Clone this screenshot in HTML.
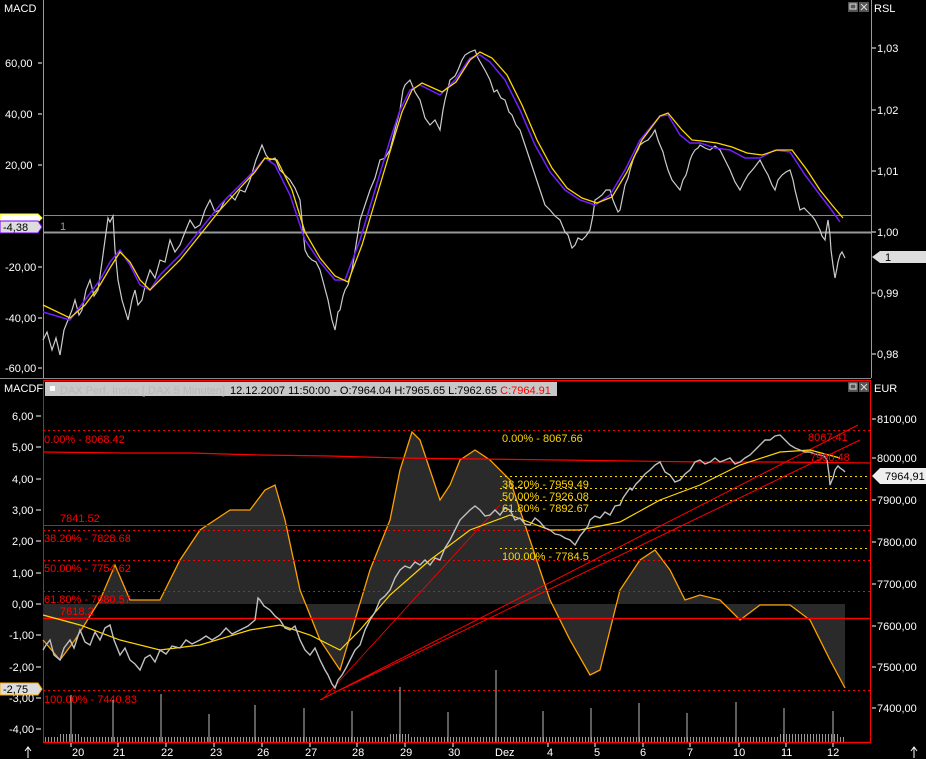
<!DOCTYPE html><html><head><style>
body{margin:0;background:#000;width:926px;height:759px;overflow:hidden;font-family:"Liberation Sans",sans-serif}
svg{display:block}
text{font-family:"Liberation Sans",sans-serif;font-size:11px}
</style></head><body>
<svg width="926" height="759" viewBox="0 0 926 759">
<defs><pattern id="vb" x="0" y="0" width="3" height="10" patternUnits="userSpaceOnUse"><rect x="0" y="0" width="1" height="10" fill="#999"/></pattern></defs>
<rect width="926" height="759" fill="#000"/>
<!-- top panel -->
<line x1="43.5" y1="0" x2="43.5" y2="378" stroke="#999"/>
<line x1="871.5" y1="0" x2="871.5" y2="378" stroke="#999"/>
<line x1="0" y1="378.5" x2="871" y2="378.5" stroke="#888"/>
<line x1="43" y1="215.5" x2="871" y2="215.5" stroke="#888"/>
<line x1="43" y1="232.5" x2="871" y2="232.5" stroke="#999" stroke-width="2"/>
<text x="60" y="230" fill="#999" font-size="10">1</text>
<g fill="#fff" font-size="11">
<text x="4" y="12">MACD</text>
<text x="5" y="67">60,00</text><text x="5" y="118">40,00</text><text x="5" y="169">20,00</text>
<text x="5" y="271">-20,00</text><text x="5" y="322">-40,00</text><text x="5" y="372">-60,00</text>
<text x="874" y="12">RSL</text>
<text x="877" y="52">1,03</text><text x="877" y="114">1,02</text><text x="877" y="175">1,01</text>
<text x="877" y="236">1,00</text><text x="877" y="297">0,99</text><text x="877" y="358">0,98</text>
</g>
<g stroke="#fff"><line x1="38" y1="63" x2="42" y2="63"/><line x1="38" y1="114" x2="42" y2="114"/><line x1="38" y1="165" x2="42" y2="165"/><line x1="38" y1="267" x2="42" y2="267"/><line x1="38" y1="318" x2="42" y2="318"/><line x1="38" y1="368" x2="42" y2="368"/>
<line x1="872" y1="48" x2="876" y2="48"/><line x1="872" y1="110" x2="876" y2="110"/><line x1="872" y1="171" x2="876" y2="171"/><line x1="872" y1="232" x2="876" y2="232"/><line x1="872" y1="293" x2="876" y2="293"/><line x1="872" y1="354" x2="876" y2="354"/></g>
<polygon points="0,214 38,214 42,218 38,222 0,222" fill="#fff" stroke="#ff0"/>
<polygon points="0,221 38,221 42,227 38,233 0,233" fill="#ddd" stroke="#70f"/>
<text x="3" y="231" fill="#000">-4,38</text>
<polygon points="872,257 880,251 926,251 926,263 880,263" fill="#ddd"/>
<text x="885" y="261" fill="#000">1</text>
<rect x="848" y="2" width="10" height="10" fill="#555"/><rect x="850" y="4" width="6" height="5" fill="none" stroke="#ddd"/>
<rect x="859" y="2" width="10" height="10" fill="#555"/><path d="M861 4l6 6M867 4l-6 6" stroke="#ddd"/>
<polyline fill="none" stroke="#ccc" stroke-width="1.2" points="43,340 47,332 52,350 56,338 60,355 64,330 68,320 72,310 75,300 79,315 82,310 86,290 90,280 94,296 98,290 102,262 105,240 108,218 110,222 113,216 115,250 118,280 122,300 125,310 128,320 132,300 135,290 138,305 142,300 146,282 150,270 155,278 160,260 165,262 170,240 175,252 180,245 185,232 190,220 195,228 200,225 205,210 210,200 215,212 220,210 225,200 230,195 235,200 240,190 245,192 250,180 256,160 262,145 266,155 270,160 275,158 280,170 285,175 290,180 295,188 300,200 303,230 305,250 308,256 312,260 316,262 320,270 324,285 328,300 332,320 335,330 338,312 340,310 343,296 345,290 348,285 352,270 356,245 360,220 365,205 370,190 375,178 380,160 385,158 390,150 395,130 400,110 403,90 405,85 408,82 410,80 415,92 420,100 425,118 430,125 435,120 440,130 443,110 445,100 448,88 450,80 455,76 458,70 462,60 465,55 470,52 475,50 478,58 482,65 486,72 490,80 494,92 497,90 501,98 505,100 509,112 512,115 516,125 520,130 525,145 530,160 535,175 540,190 545,205 550,210 555,216 560,220 565,232 568,235 572,248 575,245 578,238 582,240 586,236 590,230 593,215 595,200 598,198 602,195 606,190 610,190 613,200 615,205 618,212 620,210 623,195 625,185 628,178 630,170 633,160 635,155 638,150 640,145 644,142 648,140 652,135 655,130 658,140 660,145 663,152 665,160 668,170 672,180 676,185 680,190 683,180 686,175 688,168 690,160 692,155 695,150 698,148 700,145 705,148 710,150 715,146 720,150 725,160 730,170 735,182 740,190 744,182 748,175 754,168 760,160 764,168 768,175 772,185 775,190 778,180 782,175 786,172 790,170 793,180 795,190 798,202 800,210 804,208 808,212 812,216 815,220 818,226 820,230 822,236 825,240 826,232 828,220 830,235 831,250 833,265 835,278 837,268 838,262 840,255 842,252 845,258"/>
<polyline fill="none" stroke="#7020ff" stroke-width="1.5" points="43,312 70,320 85,300 100,280 110,262 120,250 130,265 140,285 150,290 160,275 180,255 200,230 220,205 240,185 255,170 265,158 275,165 290,195 305,240 320,262 335,280 345,280 360,240 375,190 390,140 400,110 410,90 420,85 440,95 455,80 470,58 480,55 490,62 505,80 520,110 535,145 550,172 565,190 580,200 595,205 610,195 625,170 640,140 660,116 668,115 680,135 690,143 700,143 715,148 730,150 745,158 760,158 775,150 790,152 805,175 820,195 830,208 840,222"/>
<polyline fill="none" stroke="#ffd700" stroke-width="1.3" points="43,305 70,318 85,305 100,285 110,268 120,252 130,262 140,280 150,290 160,280 180,260 200,235 220,210 240,188 255,172 265,158 277,160 292,190 305,232 320,258 335,276 348,282 362,245 377,195 392,145 402,112 412,90 422,83 442,92 456,82 470,60 480,52 492,58 507,75 522,105 537,140 552,168 567,188 582,198 597,203 612,197 627,172 642,140 660,116 668,113 682,130 692,140 702,141 717,143 732,147 747,153 762,155 777,150 792,150 807,170 820,190 832,205 843,218"/>
<!-- bottom panel -->
<rect x="43" y="380" width="828" height="1.5" fill="#f00"/>
<line x1="43.5" y1="380" x2="43.5" y2="743" stroke="#f00"/>
<line x1="870.5" y1="380" x2="870.5" y2="743" stroke="#f00"/>
<rect x="45" y="382" width="512" height="14" fill="#c8c8c8"/>
<rect x="50" y="386" width="5" height="5" fill="#fff"/>
<text x="60" y="394" fill="#b8b8b8">DAX Perf. Index [.DAX  5 Minuten]</text>
<text x="230" y="394" fill="#000">12.12.2007 11:50:00 - O:7964.04 H:7965.65 L:7962.65 <tspan fill="#f00">C:7964.91</tspan></text>
<rect x="848" y="382" width="10" height="10" fill="#555"/><rect x="850" y="384" width="6" height="5" fill="none" stroke="#ddd"/>
<rect x="859" y="382" width="10" height="10" fill="#555"/><path d="M861 384l6 6M867 384l-6 6" stroke="#ddd"/>
<g fill="#fff" font-size="11">
<text x="4" y="392">MACDF</text>
<text x="12" y="420">6,00</text><text x="12" y="451">5,00</text><text x="12" y="483">4,00</text><text x="12" y="514">3,00</text><text x="12" y="545">2,00</text><text x="12" y="577">1,00</text><text x="12" y="608">0,00</text><text x="9" y="639">-1,00</text><text x="9" y="671">-2,00</text><text x="9" y="702">-3,00</text><text x="9" y="733">-4,00</text>
<text x="874" y="392">EUR</text>
<text x="877" y="423">8100,00</text><text x="877" y="462">8000,00</text><text x="877" y="504">7900,00</text><text x="877" y="546">7800,00</text><text x="877" y="588">7700,00</text><text x="877" y="630">7600,00</text><text x="877" y="671">7500,00</text><text x="877" y="712">7400,00</text>
</g>
<g stroke="#fff"><line x1="36" y1="416" x2="41" y2="416"/><line x1="36" y1="447" x2="41" y2="447"/><line x1="36" y1="479" x2="41" y2="479"/><line x1="36" y1="510" x2="41" y2="510"/><line x1="36" y1="541" x2="41" y2="541"/><line x1="36" y1="573" x2="41" y2="573"/><line x1="36" y1="604" x2="41" y2="604"/><line x1="36" y1="635" x2="41" y2="635"/><line x1="36" y1="667" x2="41" y2="667"/><line x1="36" y1="698" x2="41" y2="698"/><line x1="36" y1="729" x2="41" y2="729"/>
<line x1="872" y1="419" x2="876" y2="419"/><line x1="872" y1="458" x2="876" y2="458"/><line x1="872" y1="500" x2="876" y2="500"/><line x1="872" y1="542" x2="876" y2="542"/><line x1="872" y1="584" x2="876" y2="584"/><line x1="872" y1="626" x2="876" y2="626"/><line x1="872" y1="667" x2="876" y2="667"/><line x1="872" y1="708" x2="876" y2="708"/></g>
<!-- histogram fill -->
<polygon fill="#2a2a2a" points="43,604 43,640 60,660 75,640 100,600 115,565 130,600 160,600 180,560 200,530 230,510 250,510 265,490 275,485 285,520 300,590 320,640 340,670 355,620 370,570 390,520 400,470 412,432 420,440 440,500 450,485 460,460 475,450 490,460 510,480 530,540 550,600 570,640 590,675 600,670 620,590 640,560 655,550 670,570 685,600 700,595 720,600 740,620 760,605 790,605 810,620 830,660 845,688 845,604"/>
<polyline fill="none" stroke="#ffa000" stroke-width="1.3" points="43,640 60,660 75,640 100,600 115,565 130,600 160,600 180,560 200,530 230,510 250,510 265,490 275,485 285,520 300,590 320,640 340,670 355,620 370,570 390,520 400,470 412,432 420,440 440,500 450,485 460,460 475,450 490,460 510,480 530,540 550,600 570,640 590,675 600,670 620,590 640,560 655,550 670,570 685,600 700,595 720,600 740,620 760,605 790,605 810,620 830,660 845,688"/>
<!-- fib lines -->
<g stroke="#f00" stroke-dasharray="2,3"><line x1="43" y1="430.5" x2="870" y2="430.5"/><line x1="43" y1="530.5" x2="870" y2="530.5"/><line x1="43" y1="560.5" x2="870" y2="560.5"/><line x1="43" y1="591.5" x2="870" y2="591.5"/><line x1="43" y1="690.5" x2="870" y2="690.5"/></g>
<g stroke="#ffd700" stroke-dasharray="2,3"><line x1="500" y1="476.5" x2="870" y2="476.5"/><line x1="500" y1="488.5" x2="870" y2="488.5"/><line x1="500" y1="500.5" x2="870" y2="500.5"/><line x1="500" y1="548.5" x2="870" y2="548.5"/></g>
<polyline fill="none" stroke="#f00" stroke-width="1.2" points="43,452 122,453 190,453 260,455 330,456 400,458 480,459 560,460 630,461 700,462 775,462 870,463"/>
<line x1="43" y1="525.5" x2="870" y2="525.5" stroke="#f00"/>
<line x1="43" y1="618.5" x2="870" y2="618.5" stroke="#f00" stroke-width="1.5"/>
<line x1="320" y1="700" x2="858" y2="425" stroke="#f00" stroke-width="1"/>
<line x1="322" y1="700" x2="500" y2="505" stroke="#f00" stroke-width="0.8"/>
<line x1="340" y1="690" x2="860" y2="440" stroke="#f00" stroke-width="1"/>
<polyline fill="none" stroke="#ffd700" stroke-width="1.2" points="43,615 80,625 120,640 160,650 200,645 250,630 280,625 310,635 340,650 360,630 390,595 430,560 470,530 510,515 550,530 580,530 620,522 660,500 700,485 740,465 780,452 810,450 840,458"/>
<polyline fill="none" stroke="#c0c0c0" stroke-width="1.4" points="43,650 46,645 50,640 54,655 60,660 64,648 70,640 74,648 80,630 85,642 90,645 95,632 100,640 105,628 110,625 114,640 120,655 125,648 130,660 135,664 140,670 145,658 150,655 155,662 160,650 166,654 172,646 180,648 186,640 192,644 200,640 206,636 212,640 220,635 226,628 232,634 240,630 248,626 255,620 258,598 260,600 264,606 270,610 275,616 280,620 285,628 290,630 295,626 300,640 305,650 310,655 315,648 320,660 325,670 328,675 332,684 335,688 338,680 342,675 346,668 350,660 355,650 360,645 365,630 370,620 375,612 380,600 385,596 390,590 395,578 400,570 405,566 410,568 415,562 420,565 425,560 430,565 435,558 440,560 445,548 450,540 455,530 460,520 465,515 470,510 475,506 480,510 485,516 490,515 495,510 500,515 505,508 510,510 515,520 520,518 525,524 530,525 535,518 540,522 545,528 550,530 555,534 560,535 565,538 570,540 575,545 580,536 585,530 588,526 590,520 595,516 600,518 605,512 610,515 615,506 620,505 623,498 625,495 630,488 632,490 636,484 640,480 645,474 650,470 655,465 660,462 665,472 670,475 675,482 680,480 685,474 690,470 695,462 700,460 705,464 710,462 715,458 720,462 725,460 730,458 735,464 740,462 745,458 750,455 755,450 760,445 765,440 770,440 775,436 780,435 785,440 790,445 795,448 800,450 805,452 810,452 815,454 820,455 824,456 827,460 829,474 830,485 832,480 833,478 835,470 838,466 840,468 843,470 845,472"/>
<!-- fib labels -->
<g fill="#f00" font-size="11">
<text x="44" y="443">0.00% - 8068.42</text>
<text x="60" y="522">7841.52</text>
<text x="44" y="542">38.20% - 7828.68</text>
<text x="44" y="572">50.00% - 7754.62</text>
<text x="44" y="603">61.80% - 7680.57</text>
<text x="60" y="615">7618.2</text>
<text x="44" y="703">100.00% - 7440.83</text>
<text x="808" y="441">8067.41</text>
<text x="810" y="461">7990.48</text>
</g>
<g fill="#ffd700" font-size="11">
<text x="502" y="442">0.00% - 8067.66</text>
<text x="502" y="488">38.20% - 7959.49</text>
<text x="502" y="500">50.00% - 7926.08</text>
<text x="502" y="512">61.80% - 7892.67</text>
<text x="502" y="560">100.00% - 7784.5</text>
</g>
<polygon points="872,476 880,468 926,468 926,484 880,484" fill="#eee"/>
<text x="885" y="480" fill="#000">7964,91</text>
<polygon points="0,683 38,683 42,689 38,695 0,695" fill="#ddd" stroke="#fa0"/>
<text x="3" y="693" fill="#000">-2,75</text>
<!-- volume -->
<rect x="45" y="737" width="800" height="5" fill="url(#vb)"/>
<rect x="60" y="734" width="20" height="8" fill="url(#vb)"/>
<rect x="390" y="734" width="20" height="8" fill="url(#vb)"/>
<rect x="780" y="734" width="60" height="8" fill="url(#vb)"/>
<g stroke="#bbb" stroke-width="1">
<path d="M71 742V695M113 742V700M161 742V694M209 742V714M255 742V705M304 742V708M352 742V711M400 742V687M448 742V712M496 742V670M543 742V711M591 742V708M639 742V703M687 742V713M736 742V702M784 742V708M833 742V711"/>
</g>
<line x1="43" y1="742.5" x2="871" y2="742.5" stroke="#f00" stroke-width="1.5"/>
<!-- date axis -->
<g fill="#fff" font-size="11">
<text x="72" y="756">20</text><text x="113" y="756">21</text><text x="161" y="756">22</text><text x="210" y="756">23</text><text x="257" y="756">26</text><text x="305" y="756">27</text><text x="352" y="756">28</text><text x="400" y="756">29</text><text x="448" y="756">30</text><text x="495" y="756">Dez</text><text x="547" y="756">4</text><text x="594" y="756">5</text><text x="640" y="756">6</text><text x="687" y="756">7</text><text x="733" y="756">10</text><text x="781" y="756">11</text><text x="827" y="756">12</text>
</g>
<g stroke="#fff"><line x1="71" y1="743" x2="71" y2="747"/><line x1="118" y1="743" x2="118" y2="747"/><line x1="166" y1="743" x2="166" y2="747"/><line x1="214" y1="743" x2="214" y2="747"/><line x1="262" y1="743" x2="262" y2="747"/><line x1="310" y1="743" x2="310" y2="747"/><line x1="357" y1="743" x2="357" y2="747"/><line x1="405" y1="743" x2="405" y2="747"/><line x1="453" y1="743" x2="453" y2="747"/><line x1="548" y1="743" x2="548" y2="747"/><line x1="595" y1="743" x2="595" y2="747"/><line x1="643" y1="743" x2="643" y2="747"/><line x1="690" y1="743" x2="690" y2="747"/><line x1="739" y1="743" x2="739" y2="747"/><line x1="786" y1="743" x2="786" y2="747"/><line x1="833" y1="743" x2="833" y2="747"/>
<path d="M28 758V748M25 751L28 747L31 751M914 758V748M911 751L914 747L917 751"/></g>
</svg>
</body></html>
